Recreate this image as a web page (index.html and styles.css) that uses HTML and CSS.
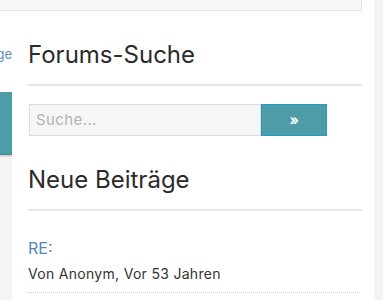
FILE: index.html
```html
<!DOCTYPE html>
<html lang="de">
<head>
<meta charset="utf-8">
<title>Forum</title>
<link rel="stylesheet" href="styles.css">
</head>
<body>
<div class="wrap">
  <div class="top">
    <div class="topbox"></div>
  </div>
  <div class="cols">
    <aside class="left">
      <div class="left-link"><a href="#">Beiträge</a></div>
      <div class="left-btn"></div>
    </aside>
    <main class="main">
      <section class="widget">
        <h2 class="widget-title">Forums-Suche</h2>
        <form class="search">
          <input class="search-input" type="text" placeholder="Suche...">
          <button class="search-btn" type="button">»</button>
        </form>
      </section>
      <section class="widget">
        <h2 class="widget-title">Neue Beiträge</h2>
        <ul class="posts">
          <li class="post">
            <a class="post-title" href="#">RE:</a>
            <div class="post-meta">Von Anonym, Vor 53 Jahren</div>
          </li>
        </ul>
      </section>
    </main>
  </div>
</div>
</body>
</html>
```

FILE: styles.css
```css
html, body {
  margin: 0;
  padding: 0;
}
body {
  background: #f4f4f4;
  font-family: "Inter", "Noto Sans", sans-serif;
  color: #333;
  height: 300px;
  overflow: hidden;
}
.wrap {
  width: 374px;
}
.top {
  background: #fff;
  padding-right: 12px;
}
.topbox {
  height: 10px;
  background: #f7f7f7;
  border-bottom: 1px solid #e4e4e4;
  border-right: 1px solid #e4e4e4;
}
.cols {
  display: flex;
  align-items: flex-start;
}
.left {
  width: 12px;
  flex: none;
  background: #fff;
  overflow: hidden;
  padding-top: 35px;
}
.left-link {
  display: flex;
  justify-content: flex-end;
  white-space: nowrap;
  font-size: 13px;
  line-height: 16px;
}
.left-link a {
  color: #5a8fbf;
  text-decoration: none;
}
.left-btn {
  margin-top: 30px;
  height: 62px;
  background: #4e9ca7;
  border-bottom: 1px solid #3f8791;
  box-shadow: 0 2px 0 #e2d6d9;
  margin-bottom: 2px;
}
.main {
  flex: 1;
  box-sizing: border-box;
  background: #fff;
  padding: 0 12px 0 16px;
  min-height: 289px;
}
.widget {
  margin-top: 30px;
}
.widget-title {
  margin: 0;
  font-size: 24px;
  line-height: 28.8px;
  font-weight: 400;
  color: #2b2b2b;
  padding-bottom: 14.2px;
  border-bottom: 2px solid #e6e6e6;
}
.search {
  display: flex;
  margin: 18px 0 0 1px;
}
.search-input {
  box-sizing: border-box;
  width: 232px;
  height: 32px;
  background: #f6f6f6;
  border: 1px solid #dcdcdc;
  padding: 0 6px;
  font-family: "Inter", sans-serif;
  font-size: 15px;
  letter-spacing: 0.4px;
  color: #333;
  outline: none;
}
.search-input::placeholder {
  color: #b3b3b3;
}
.search-btn {
  box-sizing: border-box;
  width: 66px;
  height: 32px;
  background: #4e9ca7;
  border: 1px solid #1f9bd1;
  color: #fff;
  font-family: "Inter", sans-serif;
  font-weight: 700;
  font-size: 14px;
  padding: 0;
}
.posts {
  list-style: none;
  margin: 25px 0 0;
  padding: 0;
}
.post {
  padding-bottom: 7.5px;
  border-bottom: 1px dotted #cfcfcf;
  margin-right: 2px;
}
.post-title {
  display: block;
  font-size: 16px;
  line-height: 24px;
  color: #4f86b3;
  text-decoration: none;
}
.post-meta {
  margin-top: 4.5px;
  font-size: 14px;
  letter-spacing: 0.3px;
  line-height: 20px;
  color: #333;
}
```
